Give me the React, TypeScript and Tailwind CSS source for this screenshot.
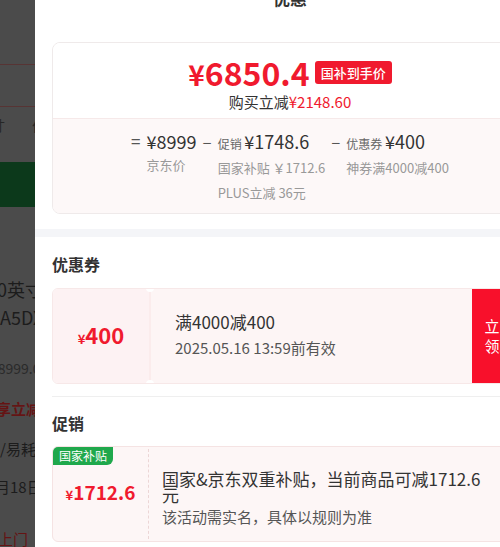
import React from 'react';

const red = 'text-[#f01a2e]';

function DimmedPage() {
  // page underneath the drawer, dimmed by the mask
  return (
    <div className="w-[35px] shrink-0 h-full overflow-hidden bg-[#4b4b4b] text-[#1c1c1c] whitespace-nowrap">
      <div className="h-[64px]" />
      <div className="h-px bg-[#573434]" />
      <div className="h-[41px]" />
      <div className="h-px bg-[#573434]" />
      <div className="h-[36px] flex items-center text-[14px] text-[#262626]">
        <span className="-ml-[23px]">尺寸</span>
        <span className="ml-[17px] w-px h-[14px] bg-[#3a3a3a]" />
        <span className="ml-[10px]">价格</span>
      </div>
      <div className="h-[19px]" />
      <div className="h-[45px] bg-[#0c391b]" />
      <div className="h-[68px]" />
      <div className="h-[28px] leading-[28px] text-[18px] -ml-[13px]">70英寸</div>
      <div className="h-[28px] leading-[28px] text-[18px]">A5DX</div>
      <div className="h-[25px]" />
      <div className="h-[24px] leading-[24px] text-[14px] text-[#2a2a2a] -ml-[10px]">¥8999.00</div>
      <div className="h-[17px]" />
      <div className="h-[24px] leading-[24px] text-[15px] font-bold text-[#651414] -ml-[19px]">已享立减</div>
      <div className="h-[16px]" />
      <div className="h-[24px] leading-[24px] text-[15px]">/易耗品</div>
      <div className="h-[14px]" />
      <div className="h-[24px] leading-[24px] text-[15px] -ml-[5px]">月18日</div>
      <div className="h-[28px]" />
      <div className="h-[24px] leading-[24px] text-[15px] text-[#651414] -ml-[17px]">送上门</div>
    </div>
  );
}

function PriceCard() {
  return (
    <div className="rounded-[8px] border border-[#efeaea] overflow-hidden">
      <div className="h-[75px] bg-white flex flex-col items-center">
        <div className="flex items-center mt-[9px] h-[40px]">
          <span className={`${red} font-bold text-[32px] leading-none`}>
            <span className="text-[28px]">¥</span>6850.4
          </span>
          <span className="ml-[5px] h-[23px] px-[6px] rounded-[3px] bg-[#f01a2e] text-white text-[13px] font-medium leading-[23px]">
            国补到手价
          </span>
        </div>
        <div className="text-[15px] leading-[20px] text-[#333]">
          购买立减<span className={red}>¥2148.60</span>
        </div>
      </div>
      <div className="h-[95px] border-t border-[#f6e9e9] bg-[#fdf8f8] flex justify-center pt-[10px]">
        <div className="flex gap-[6px] items-start text-[#333]">
          <span className="text-[17px] leading-[24px] text-[#555]">=</span>
          <div className="flex flex-col">
            <span className="text-[18px] leading-[24px]">¥8999</span>
            <span className="text-[13px] leading-[24px] text-[#999]">京东价</span>
          </div>
          <span className="text-[17px] leading-[24px] text-[#555]">–</span>
          <div className="flex flex-col">
            <span className="text-[18px] leading-[24px]">
              <span className="text-[12px] text-[#666]">促销 </span>¥1748.6
            </span>
            <span className="text-[13px] leading-[24px] text-[#999]">国家补贴 ￥1712.6</span>
            <span className="text-[13px] leading-[25px] text-[#999]">PLUS立减 36元</span>
          </div>
          <span className="text-[17px] leading-[24px] text-[#555]">–</span>
          <div className="flex flex-col">
            <span className="text-[18px] leading-[24px]">
              <span className="text-[12px] text-[#666]">优惠券 </span>¥400
            </span>
            <span className="text-[13px] leading-[24px] text-[#999]">神券满4000减400</span>
          </div>
        </div>
      </div>
    </div>
  );
}

function CouponCard() {
  return (
    <div className="h-[96px] flex rounded-[6px] overflow-hidden border border-[#f7e8e8]">
      <div className="w-[96px] shrink-0 bg-[#fdf2f3] flex items-center justify-center pb-[5px]">
        <span className={`${red} font-semibold text-[22px] leading-none`}>
          <span className="text-[13px]">¥</span>400
        </span>
      </div>
      <div className="relative w-[2px] shrink-0 bg-[#fbecec]">
        <div className="absolute -top-[5px] -left-[3px] w-[8px] h-[8px] rounded-full bg-white" />
        <div className="absolute -bottom-[5px] -left-[3px] w-[8px] h-[8px] rounded-full bg-white" />
      </div>
      <div className="flex-1 bg-[#fdf5f5] pl-[24px] pb-[4px] flex flex-col justify-center">
        <div className="text-[17px] leading-[24px] text-[#333]">满4000减400</div>
        <div className="text-[15px] leading-[22px] text-[#555] mt-[3px]">2025.05.16 13:59前有效</div>
      </div>
      <div className="w-[55px] shrink-0 bg-[#f8102b] flex flex-col items-center justify-center text-white text-[15px] leading-[20px]">
        <span>立即</span>
        <span>领取</span>
      </div>
    </div>
  );
}

function PromoCard() {
  return (
    <div className="relative h-[96px] flex rounded-[6px] overflow-hidden border border-[#f5e3e3] bg-[#fdf6f6]">
      <span className="absolute top-0 left-0 h-[18px] px-[6px] bg-[#1fa84c] text-white text-[12px] leading-[18px] rounded-br-[6px]">
        国家补贴
      </span>
      <div className="w-[95px] shrink-0 flex items-center justify-center pb-[6px]">
        <span className={`${red} font-semibold text-[19px] leading-none`}>
          <span className="text-[13px]">¥</span>1712.6
        </span>
      </div>
      <div className="w-0 border-l border-dashed border-[#ecd6d6] my-[2px]" />
      <div className="pl-[13px] pt-[24px] w-[340px]">
        <div className="text-[17px] leading-[16px] text-[#333] w-[325px]">
          国家&京东双重补贴，当前商品可减1712.6元
        </div>
        <div className="text-[15px] leading-[20px] text-[#555] mt-[4px]">该活动需实名，具体以规则为准</div>
      </div>
    </div>
  );
}

export default function App() {
  return (
    <div className="w-[500px] h-[547px] overflow-hidden flex bg-white font-['Noto_Sans_CJK_SC',sans-serif]">
      <DimmedPage />
      <div className="w-[510px] shrink-0 h-full bg-white flex flex-col">
        <div className="h-[42px] flex justify-center">
          <span className="-mt-[14px] text-[17px] leading-[24px] font-bold text-[#333]">优惠</span>
        </div>
        <div className="px-[17px] pb-[15px]">
          <PriceCard />
        </div>
        <div className="h-[8px] bg-[#f4f5f8]" />
        <div className="px-[17px]">
          <div className="h-[51px] flex items-center text-[16px] font-semibold text-[#333] pt-[3px]">优惠券</div>
          <CouponCard />
          <div className="h-[12px]" />
          <div className="h-px bg-[#efefef]" />
          <div className="h-[49px] flex items-center text-[16px] font-semibold text-[#333] pt-[3px]">促销</div>
          <PromoCard />
        </div>
      </div>
    </div>
  );
}
